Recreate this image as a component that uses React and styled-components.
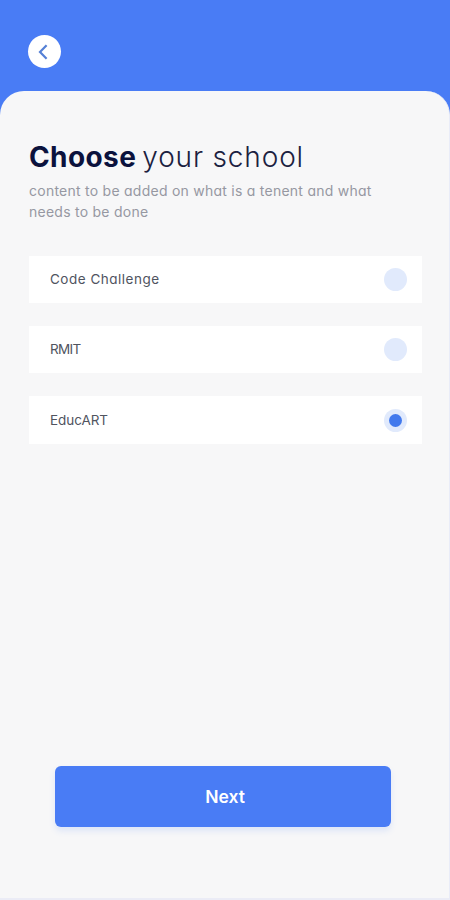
import React, { useState } from 'react';
import styled, { createGlobalStyle } from 'styled-components';

const schools = [
  { name: 'Code Challenge', spacing: '0.5px' },
  { name: 'RMIT', spacing: '-0.7px' },
  { name: 'EducART', spacing: '-0.05px' },
];

function App() {
  const [selected, setSelected] = useState('EducART');

  return (
    <>
      <GlobalStyle />
      <Container>
        <Header>
          <BackButton aria-label="Back">
            <svg width="10" height="16" viewBox="0 0 10 16" fill="none">
              <path d="M8.6 1.2L2 8L8.6 14.8" stroke="#5580d6" strokeWidth="2.2" />
            </svg>
          </BackButton>
        </Header>
        <Panel>
          <Title>
            <TitleBold>Choose</TitleBold>
            <TitleLight>your school</TitleLight>
          </Title>
          <Description>
            <DescriptionLine>content to be added on what is a tenent and what</DescriptionLine>
            <DescriptionLine>needs to be done</DescriptionLine>
          </Description>
          <SchoolList>
            {schools.map(({ name, spacing }) => (
              <SchoolItem key={name} onClick={() => setSelected(name)}>
                <SchoolName $spacing={spacing}>{name}</SchoolName>
                <Radio>{selected === name && <RadioDot />}</Radio>
              </SchoolItem>
            ))}
          </SchoolList>
          <NextButton>Next</NextButton>
        </Panel>
      </Container>
    </>
  );
}

export default App;

const GlobalStyle = createGlobalStyle`
  * {
    box-sizing: border-box;
  }

  body {
    margin: 0;
    font-family: 'Inter', sans-serif;
    font-feature-settings: 'cv11'; /* single-storey a */
  }

  button {
    font: inherit;
    font-feature-settings: inherit;
    border: none;
    padding: 0;
    cursor: pointer;
  }
`;

const Container = styled.div`
  display: flex;
  flex-direction: column;
  width: 100%;
  height: 900px;
  background: #497cf5;
`;

const Header = styled.header`
  height: 91px;
  flex-shrink: 0;
  padding: 35px 28px 0;
`;

const BackButton = styled.button`
  display: flex;
  width: 33px;
  height: 33px;
  justify-content: center;
  align-items: center;
  padding-right: 3px;
  border-radius: 50%;
  background: #fff;
`;

const Panel = styled.main`
  display: flex;
  flex: 1;
  flex-direction: column;
  padding: 48px 27px 0 29px;
  border-right: 1px solid #e9ecf8;
  border-bottom: 2px solid #ebecf6;
  border-radius: 24px 24px 0 0;
  background: #f7f7f8;
`;

const Title = styled.h1`
  display: flex;
  align-items: baseline;
  gap: 6px;
  margin: 0;
  color: #0b123d;
  font-size: 28px;
  line-height: 36px;
  white-space: nowrap;
`;

const TitleBold = styled.span`
  font-weight: 700;
  letter-spacing: 0.4px;
`;

const TitleLight = styled.span`
  color: #1b2140;
  font-weight: 300;
  letter-spacing: 0.85px;
`;

const Description = styled.p`
  margin: 5px 0 0;
  color: #9698a2;
  font-size: 14px;
  font-weight: 400;
  line-height: 21px;
`;

const DescriptionLine = styled.span`
  display: block;
  letter-spacing: 0.25px;
  white-space: nowrap;
`;

const SchoolList = styled.div`
  display: flex;
  flex-direction: column;
  gap: 23px;
  margin-top: 34px;
`;

const SchoolItem = styled.button`
  display: flex;
  height: 47px;
  justify-content: space-between;
  align-items: center;
  padding: 0 15px 0 21px;
  background: #fff;
  color: #50545f;
  font-size: 13.5px;
  text-align: left;

  &:last-child {
    height: 48px;
  }
`;

const SchoolName = styled.span`
  padding-bottom: 1px;
  letter-spacing: ${(props) => props.$spacing};
`;

const Radio = styled.span`
  display: flex;
  width: 23px;
  height: 23px;
  justify-content: center;
  align-items: center;
  border-radius: 50%;
  background: #e1eafc;
`;

const RadioDot = styled.span`
  width: 13px;
  height: 13px;
  border-radius: 50%;
  background: #4279ed;
`;

const NextButton = styled.button`
  height: 61px;
  margin: auto 31px 71px 26px;
  padding-left: 4px;
  border-radius: 6px;
  background: #497cf5;
  box-shadow: 0 4px 6px rgba(73, 124, 245, 0.14);
  color: #fff;
  font-size: 17.5px;
  font-weight: 600;
`;
